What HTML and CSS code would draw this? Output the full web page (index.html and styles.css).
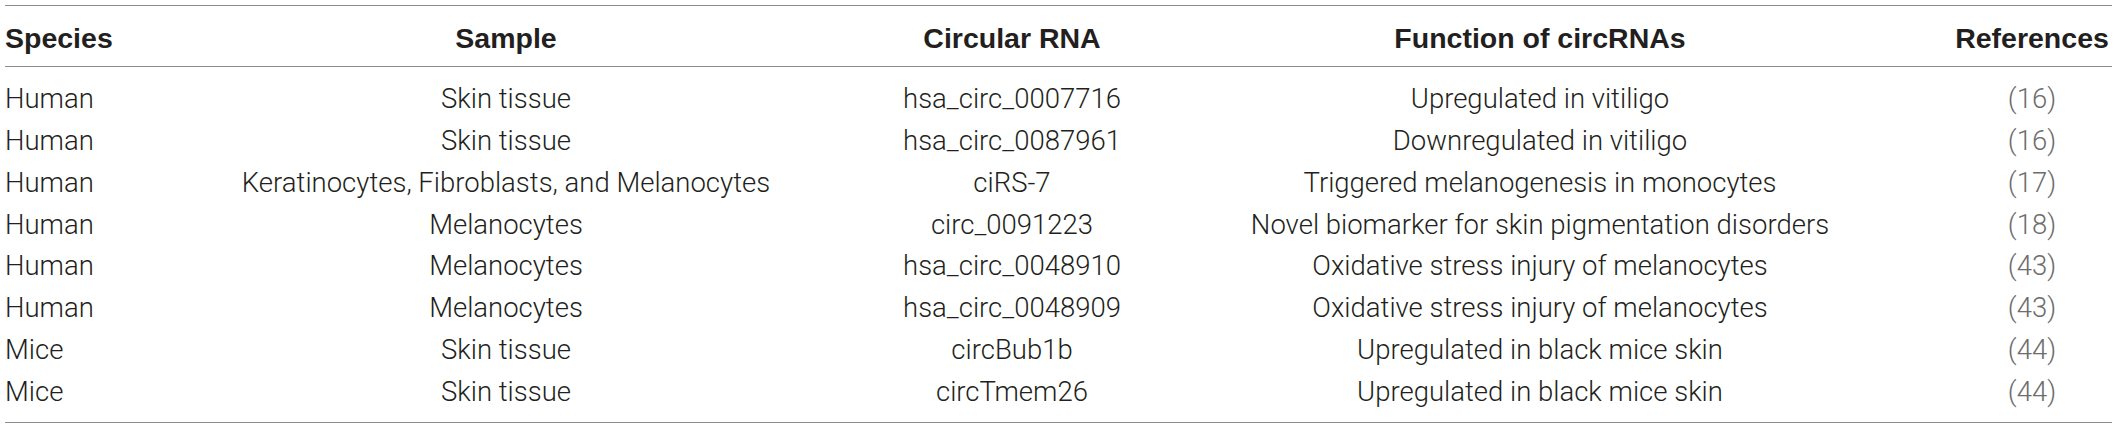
FILE: index.html
```html
<!DOCTYPE html>
<html lang="en">
<head>
<meta charset="utf-8">
<title>CircRNAs in pigmentation</title>
<link rel="stylesheet" href="styles.css">
</head>
<body>
<table class="data-table">
  <colgroup>
    <col class="col-species">
    <col class="col-sample">
    <col class="col-circ">
    <col class="col-function">
    <col class="col-ref">
  </colgroup>
  <thead>
    <tr>
      <th class="cell-left">Species</th>
      <th>Sample</th>
      <th>Circular RNA</th>
      <th>Function of circRNAs</th>
      <th>References</th>
    </tr>
  </thead>
  <tbody>
    <tr>
      <td class="cell-left">Human</td>
      <td>Skin tissue</td>
      <td>hsa_circ_0007716</td>
      <td>Upregulated in vitiligo</td>
      <td class="cell-ref">(16)</td>
    </tr>
    <tr>
      <td class="cell-left">Human</td>
      <td>Skin tissue</td>
      <td>hsa_circ_0087961</td>
      <td>Downregulated in vitiligo</td>
      <td class="cell-ref">(16)</td>
    </tr>
    <tr>
      <td class="cell-left">Human</td>
      <td>Keratinocytes, Fibroblasts, and Melanocytes</td>
      <td>ciRS-7</td>
      <td>Triggered melanogenesis in monocytes</td>
      <td class="cell-ref">(17)</td>
    </tr>
    <tr>
      <td class="cell-left">Human</td>
      <td>Melanocytes</td>
      <td>circ_0091223</td>
      <td>Novel biomarker for skin pigmentation disorders</td>
      <td class="cell-ref">(18)</td>
    </tr>
    <tr>
      <td class="cell-left">Human</td>
      <td>Melanocytes</td>
      <td>hsa_circ_0048910</td>
      <td>Oxidative stress injury of melanocytes</td>
      <td class="cell-ref">(43)</td>
    </tr>
    <tr>
      <td class="cell-left">Human</td>
      <td>Melanocytes</td>
      <td>hsa_circ_0048909</td>
      <td>Oxidative stress injury of melanocytes</td>
      <td class="cell-ref">(43)</td>
    </tr>
    <tr>
      <td class="cell-left">Mice</td>
      <td>Skin tissue</td>
      <td>circBub1b</td>
      <td>Upregulated in black mice skin</td>
      <td class="cell-ref">(44)</td>
    </tr>
    <tr>
      <td class="cell-left">Mice</td>
      <td>Skin tissue</td>
      <td>circTmem26</td>
      <td>Upregulated in black mice skin</td>
      <td class="cell-ref">(44)</td>
    </tr>
  </tbody>
</table>
</body>
</html>
```

FILE: styles.css
```css
html, body {
  margin: 0;
  padding: 0;
  background: #ffffff;
}

body {
  padding: 5px 5px 0 5px;
  font-family: "Roboto", "Liberation Sans", Arial, sans-serif;
  color: #231f20;
}

.data-table {
  width: 2107px;
  table-layout: fixed;
  border-collapse: collapse;
  border-top: 1px solid #8c8c8c;
  border-bottom: 1px solid #8c8c8c;
}

.col-species { width: 111px; }
.col-sample { width: 780px; }
.col-circ { width: 232px; }
.col-function { width: 824px; }
.col-ref { width: 160px; }

.data-table th {
  font-family: "Liberation Sans", Arial, sans-serif;
  font-weight: 700;
  font-size: 28.5px;
  text-align: center;
  padding: 4px 0 0 0;
  height: 56px;
  vertical-align: middle;
  white-space: nowrap;
  border-bottom: 1px solid #8c8c8c;
  color: #231f20;
}

.data-table td {
  font-weight: 300;
  font-size: 27.5px;
  text-align: center;
  padding: 0;
  height: 41.75px;
  vertical-align: middle;
  white-space: nowrap;
}

.data-table tbody tr:first-child td {
  padding-top: 11px;
}

.data-table tbody tr:last-child td {
  padding-bottom: 10px;
}

.data-table .cell-left {
  text-align: left;
}

.data-table .cell-ref {
  color: #6d6d6d;
}
```
